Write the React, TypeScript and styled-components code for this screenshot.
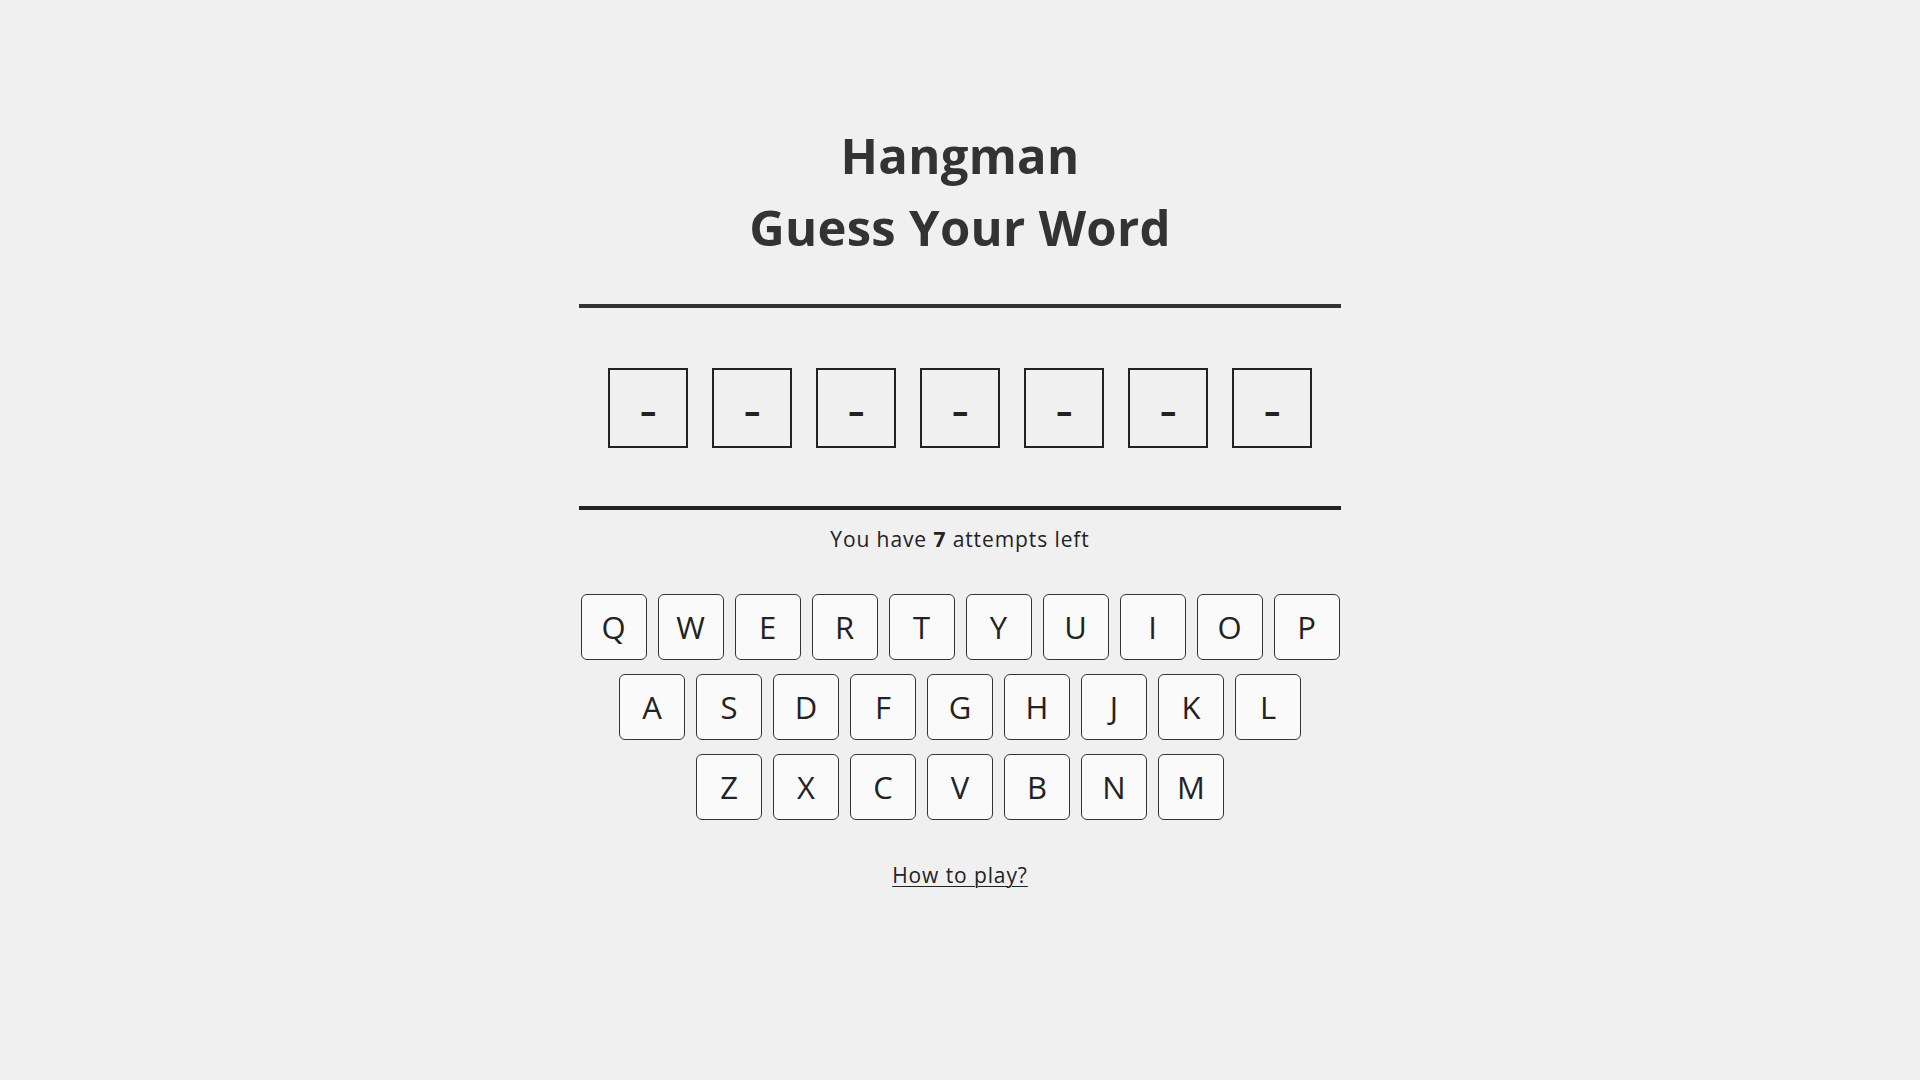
import React from "react";
import styled, { createGlobalStyle } from "styled-components";

const GlobalStyle = createGlobalStyle`
  html, body {
    margin: 0;
    padding: 0;
    background: #f0f0f0;
  }
  body {
    font-family: "Open Sans", "Liberation Sans", sans-serif;
    color: #222;
  }
`;

const Page = styled.main`
  width: 762px;
  margin: 0 auto;
  padding-top: 119px;
  display: flex;
  flex-direction: column;
  align-items: stretch;
`;

const Title = styled.h1`
  margin: 0;
  font-size: 49px;
  line-height: 72px;
  font-weight: 700;
  color: #333;
  text-align: center;
  letter-spacing: 0.3px;
`;

const WordSection = styled.section`
  margin-top: 41px;
  border-top: 4px solid #333;
  border-bottom: 4px solid #222;
  padding: 60px 0 58px;
  display: flex;
  justify-content: center;
  gap: 24px;
`;

const LetterBox = styled.div`
  width: 80px;
  height: 80px;
  box-sizing: border-box;
  border: 2px solid #222;
  display: flex;
  align-items: center;
  justify-content: center;
  color: #222;
`;

const Dash = styled.span`
  display: inline-block;
  font-size: 32px;
  font-weight: 700;
  line-height: 1;
  transform: translateY(3px) scaleX(1.6);
`;

const Attempts = styled.p`
  margin: 14px 0 0;
  text-align: center;
  font-size: 21px;
  line-height: 30px;
  letter-spacing: 0.9px;
  color: #222;

  strong {
    font-weight: 700;
  }
`;

const Keyboard = styled.div`
  margin-top: 40px;
  display: flex;
  flex-direction: column;
  align-items: center;
  gap: 14px;
`;

const KeyRow = styled.div`
  display: flex;
  justify-content: center;
  gap: 11px;
`;

const Key = styled.button`
  width: 66px;
  height: 66px;
  box-sizing: border-box;
  border: 1px solid #333;
  border-radius: 6px;
  background: #fafafa;
  color: #222;
  font-family: inherit;
  font-size: 31px;
  font-weight: 400;
  display: flex;
  align-items: center;
  justify-content: center;
  padding: 0;
  cursor: pointer;
`;

const HelpLink = styled.a`
  margin-top: 40px;
  align-self: center;
  font-size: 21px;
  line-height: 30px;
  letter-spacing: 0.9px;
  color: #222;
  text-decoration: underline;
  text-underline-offset: 3px;
  text-decoration-thickness: 1px;
  cursor: pointer;
`;

const rows = ["QWERTYUIOP", "ASDFGHJKL", "ZXCVBNM"];

export default function App() {
  const word = Array.from({ length: 7 }, () => "-");
  return (
    <>
      <GlobalStyle />
      <Page>
        <Title>
          Hangman
          <br />
          Guess Your Word
        </Title>
        <WordSection>
          {word.map((c, i) => (
            <LetterBox key={i}>
              <Dash>{c}</Dash>
            </LetterBox>
          ))}
        </WordSection>
        <Attempts>
          You have <strong>7</strong> attempts left
        </Attempts>
        <Keyboard>
          {rows.map((row) => (
            <KeyRow key={row}>
              {row.split("").map((ch) => (
                <Key key={ch}>{ch}</Key>
              ))}
            </KeyRow>
          ))}
        </Keyboard>
        <HelpLink>How to play?</HelpLink>
      </Page>
    </>
  );
}
